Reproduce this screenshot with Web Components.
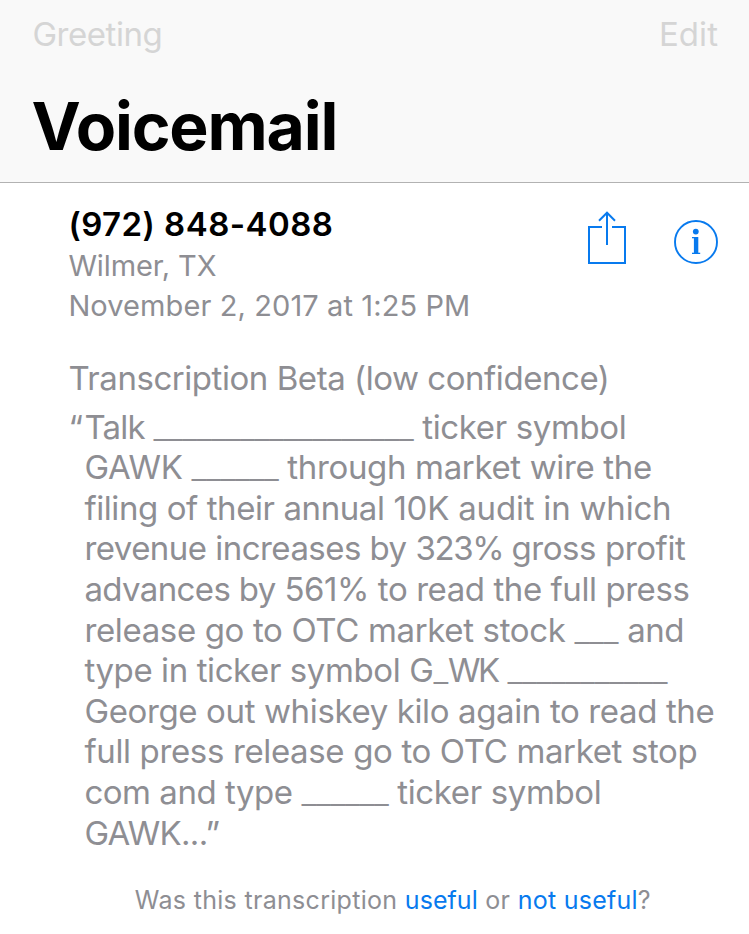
<!DOCTYPE html>
<html lang="en">
<head>
<meta charset="utf-8">
<meta name="viewport" content="width=device-width, initial-scale=1">
<title>Voicemail</title>
<style>
    body {
        margin: 0;
        background: #fff;
        font-family: Inter, "Liberation Sans", sans-serif;
    }
</style>
</head>
<body>
<voicemail-screen></voicemail-screen>

<script>
// A run of text whose letters are spaced out to fill the given width
class FitText extends HTMLElement {
    constructor() {
        super();
        this.attachShadow({ mode: 'open' });
        this.shadowRoot.innerHTML = `
            <style>
            :host {
                display: inline-block;
                white-space: pre;
            }
            /* unrecognised words are drawn with a thinner rule */
            :host([blank]) {
                font-weight: 300;
            }
            </style>
            <slot></slot>
        `.trim().replace(/>\s+<slot/, '><slot');
    }

    connectedCallback() {
        const width = parseFloat(this.getAttribute('width'));
        const natural = this.getBoundingClientRect().width;
        this.style.letterSpacing = (width - natural) / this.textContent.length + 'px';
        this.style.width = width + 'px';
    }
}

class NavHeader extends HTMLElement {
    constructor() {
        super();
        this.attachShadow({ mode: 'open' });
        this.shadowRoot.innerHTML = `
            <style>
            :host {
                display: block;
                box-sizing: border-box;
                height: 183px;
                padding: 14px 31px 0 32.4px;
                background: #f9f9f9;
                border-bottom: 1px solid #b2b2b2;
            }
            .bar {
                display: flex;
                justify-content: space-between;
                font-size: 33px;
                line-height: 40px;
                color: #d5d5d5;
            }
            h1 {
                margin: 32px 0 0 -0.8px;
                font-size: 66px;
                line-height: 80px;
                font-weight: 750;
                color: #000;
            }
            </style>
            <div class="bar">
                <slot name="left"></slot>
                <slot name="right"></slot>
            </div>
            <h1><slot></slot></h1>
        `;
    }
}

class ShareIcon extends HTMLElement {
    constructor() {
        super();
        this.attachShadow({ mode: 'open' });
        this.shadowRoot.innerHTML = `
            <style>
            :host { display: block; width: 40px; height: 54px; }
            svg { display: block; }
            </style>
            <svg width="40" height="54" viewBox="0 0 40 54" fill="none" stroke="currentColor" stroke-width="2">
                <path d="M15 17H2v36h36V17H25"/>
                <path d="M20 3v32M12 10.7l8-8 8 8"/>
            </svg>
        `;
    }
}

class InfoIcon extends HTMLElement {
    constructor() {
        super();
        this.attachShadow({ mode: 'open' });
        this.shadowRoot.innerHTML = `
            <style>
            :host { display: block; width: 44px; height: 44px; }
            svg { display: block; }
            </style>
            <svg width="44" height="44" viewBox="0 0 44 44" fill="currentColor">
                <circle cx="22" cy="22" r="21" fill="none" stroke="currentColor" stroke-width="1.9"/>
                <circle cx="21.8" cy="11.6" r="2.9"/>
                <rect x="19.9" y="17" width="4.4" height="17"/>
                <rect x="18" y="17" width="3" height="1.3"/>
                <rect x="18" y="32.7" width="8.2" height="1.3"/>
            </svg>
        `;
    }
}

class CallSummary extends HTMLElement {
    constructor() {
        super();
        this.attachShadow({ mode: 'open' });
        this.shadowRoot.innerHTML = `
            <style>
            :host {
                display: flex;
                justify-content: space-between;
                padding: 21px 31px 0 68.4px;
                color: #8e8e93;
                font-size: 29px;
                line-height: 40px;
            }
            .number {
                margin-bottom: 2px;
                color: #000;
                font-size: 33px;
                font-weight: 600;
            }
            .actions {
                display: flex;
                align-items: flex-end;
                gap: 47px;
                height: 54px;
                padding-top: 6px;
                color: #087aee;
            }
            </style>
            <div>
                <div class="number"><slot name="number"></slot></div>
                <div><slot name="place"></slot></div>
                <div><slot name="date"></slot></div>
            </div>
            <div class="actions">
                <share-icon></share-icon>
                <info-icon></info-icon>
            </div>
        `;
    }
}

class VoicemailTranscript extends HTMLElement {
    constructor() {
        super();
        this.attachShadow({ mode: 'open' });
        this.shadowRoot.innerHTML = `
            <style>
            :host {
                display: block;
                padding: 32px 0 0 68.4px;
                color: #8e8e93;
                font-size: 33px;
                line-height: 40px;
            }
            .lines {
                display: grid;
                grid-auto-rows: 40.6px;
                margin: 8.7px 0 0 16px;
                line-height: 40.6px;
                white-space: nowrap;
            }
            </style>
            <slot name="heading"></slot>
            <div class="lines"><slot></slot></div>
        `;
    }
}

class FeedbackPrompt extends HTMLElement {
    constructor() {
        super();
        this.attachShadow({ mode: 'open' });
        this.shadowRoot.innerHTML = `
            <style>
            :host {
                display: flex;
                padding: 31.6px 0 0 134.8px;
                color: #8e8e93;
                font-size: 25px;
                line-height: 30px;
            }
            .link { color: #087aee; }
            </style>
            <fit-text width="270">Was this transcription </fit-text>
            <fit-text class="link" width="73">useful</fit-text>
            <fit-text width="40"> or </fit-text>
            <fit-text class="link" width="120">not useful</fit-text>
            <fit-text width="13.5">?</fit-text>
        `;
    }
}

class VoicemailScreen extends HTMLElement {
    constructor() {
        super();
        this.attachShadow({ mode: 'open' });
        this.shadowRoot.innerHTML = `
            <style>
            :host {
                display: block;
                height: 934px;
                overflow: hidden;
            }
            /* the opening quote hangs to the left of the text */
            .quote { margin-left: -16px; }
            </style>
            <nav-header>
                <fit-text slot="left" width="130">Greeting</fit-text>
                <fit-text slot="right" width="59">Edit</fit-text>
                <fit-text width="305.5">Voicemail</fit-text>
            </nav-header>
            <call-summary>
                <fit-text slot="number" width="265">(972) 848-4088</fit-text>
                <fit-text slot="place" width="148">Wilmer, TX</fit-text>
                <fit-text slot="date" width="402">November 2, 2017 at 1:25 PM</fit-text>
            </call-summary>
            <voicemail-transcript>
                <fit-text slot="heading" width="541">Transcription Beta (low confidence)</fit-text>
                <div><fit-text class="quote" width="16">“</fit-text><fit-text width="69">Talk </fit-text><fit-text blank width="260">__________________</fit-text><fit-text width="213">&nbsp;ticker symbol</fit-text></div>
                <div><fit-text width="107">GAWK </fit-text><fit-text blank width="87">______</fit-text><fit-text width="373.5"> through market wire the</fit-text></div>
                <div><fit-text width="309">filing of their annual </fit-text><fit-text width="278">10K audit in which</fit-text></div>
                <div><fit-text width="331">revenue increases by </fit-text><fit-text width="96">323% </fit-text><fit-text width="174">gross profit</fit-text></div>
                <div><fit-text width="200">advances by </fit-text><fit-text width="405">561% to read the full press</fit-text></div>
                <div><fit-text width="490">release go to OTC market stock </fit-text><fit-text blank width="44">___</fit-text><fit-text width="65.5"> and</fit-text></div>
                <div><fit-text width="349">type in ticker symbol G</fit-text><fit-text blank width="14.5">_</fit-text><fit-text width="50">WK</fit-text><fit-text width="9.5"> </fit-text><fit-text blank width="160">___________</fit-text></div>
                <div><fit-text width="630">George out whiskey kilo again to read the</fit-text></div>
                <div><fit-text width="613">full press release go to OTC market stop</fit-text></div>
                <div><fit-text width="217">com and type </fit-text><fit-text blank width="87">______</fit-text><fit-text width="213">&nbsp;ticker symbol</fit-text></div>
                <div><fit-text width="135">GAWK...”</fit-text></div>
            </voicemail-transcript>
            <feedback-prompt></feedback-prompt>
        `;
    }
}

// fit-text goes last: it measures itself once its parents have their styles
customElements.define('nav-header', NavHeader);
customElements.define('share-icon', ShareIcon);
customElements.define('info-icon', InfoIcon);
customElements.define('call-summary', CallSummary);
customElements.define('voicemail-transcript', VoicemailTranscript);
customElements.define('feedback-prompt', FeedbackPrompt);
customElements.define('voicemail-screen', VoicemailScreen);
customElements.define('fit-text', FitText);
</script>
</body>
</html>
